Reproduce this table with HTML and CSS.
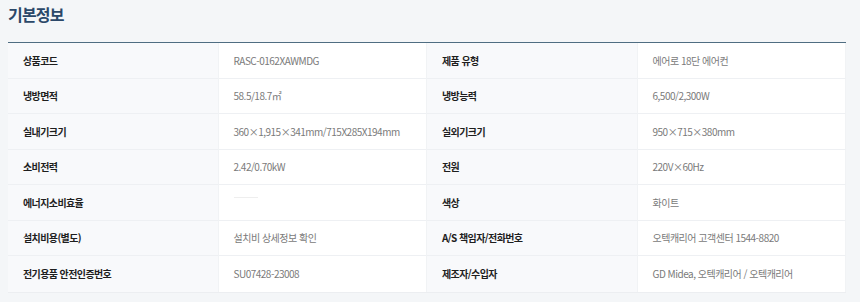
FILE: index.html
```html
<!DOCTYPE html>
<html lang="ko">
<head>
<meta charset="utf-8">
<title>기본정보</title>
<link rel="stylesheet" href="styles.css">
</head>
<body>
<div class="page">
  <h2 class="title">기본정보</h2>
  <div class="spec">
    <div class="lbl">상품코드</div><div class="val">RASC-0162XAWMDG</div>
    <div class="lbl">제품 유형</div><div class="val">에어로 18단 에어컨</div>

    <div class="lbl">냉방면적</div><div class="val">58.5/18.7㎡</div>
    <div class="lbl">냉방능력</div><div class="val">6,500/2,300W</div>

    <div class="lbl">실내기크기</div><div class="val">360×1,915×341mm/715X285X194mm</div>
    <div class="lbl">실외기크기</div><div class="val">950×715×380mm</div>

    <div class="lbl">소비전력</div><div class="val">2.42/0.70kW</div>
    <div class="lbl">전원</div><div class="val">220V×60Hz</div>

    <div class="lbl">에너지소비효율</div><div class="val"><span class="faint"></span></div>
    <div class="lbl">색상</div><div class="val">화이트</div>

    <div class="lbl">설치비용(별도)</div><div class="val">설치비 상세정보 확인</div>
    <div class="lbl">A/S 책임자/전화번호</div><div class="val">오텍캐리어 고객센터 1544-8820</div>

    <div class="lbl">전기용품 안전인증번호</div><div class="val">SU07428-23008</div>
    <div class="lbl">제조자/수입자</div><div class="val">GD Midea, 오텍캐리어 / 오텍캐리어</div>
  </div>
</div>
</body>
</html>
```

FILE: styles.css
```css
html, body {
  margin: 0;
  padding: 0;
  background: #f4f6f8;
}
body {
  font-family: "Noto Sans CJK KR", "Noto Sans", sans-serif;
}
.page {
  padding: 0 14px 0 8px;
}
.title {
  margin: 4px 0 18px 0;
  font-size: 16px;
  line-height: 20px;
  font-weight: 700;
  letter-spacing: -0.8px;
  color: #2b4869;
}
.spec {
  display: grid;
  grid-template-columns: repeat(4, 1fr);
  grid-auto-rows: 35.5px;
  border-top: 1px solid #4f6d82;
  border-bottom: 1px solid #eceef1;
}
.lbl, .val {
  display: flex;
  align-items: center;
  padding: 0 15px;
  font-size: 10px;
  border-bottom: 1px solid #eef0f3;
  white-space: nowrap;
  overflow: hidden;
}
.spec > div:nth-last-child(-n+4) {
  border-bottom: 0;
}
.lbl {
  background: #f8f9fb;
  color: #1e1e1e;
  font-weight: 700;
  letter-spacing: -0.6px;
}
.val {
  background: #fff;
  color: #7a7a7a;
  letter-spacing: -0.5px;
  border-left: 1px solid #f1f3f5;
  border-right: 1px solid #f1f3f5;
}
.faint {
  display: block;
  width: 24px;
  height: 1px;
  margin-top: -10px;
  background: #eeeeee;
}
```
